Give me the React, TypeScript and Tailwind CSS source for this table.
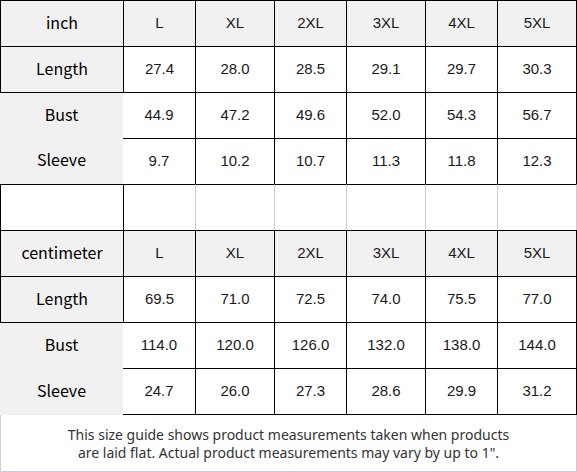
import React from "react"
import clsx from "clsx"

type RowKind = "header" | "length" | "bust" | "sleeve" | "empty"

type Row = {
  kind: RowKind
  label: string
  values: string[]
  bottom?: boolean
}

const widths = [
  "w-[123px]",
  "w-[72px]",
  "w-[79px]",
  "w-[72px]",
  "w-[79px]",
  "w-[72px]",
  "w-[80px]",
]

const sizes = ["L", "XL", "2XL", "3XL", "4XL", "5XL"]

const rows: Row[] = [
  { kind: "header", label: "inch", values: sizes },
  { kind: "length", label: "Length", values: ["27.4", "28.0", "28.5", "29.1", "29.7", "30.3"] },
  { kind: "bust", label: "Bust", values: ["44.9", "47.2", "49.6", "52.0", "54.3", "56.7"] },
  { kind: "sleeve", label: "Sleeve", values: ["9.7", "10.2", "10.7", "11.3", "11.8", "12.3"] },
  { kind: "empty", label: "", values: ["", "", "", "", "", ""] },
  { kind: "header", label: "centimeter", values: sizes },
  { kind: "length", label: "Length", values: ["69.5", "71.0", "72.5", "74.0", "75.5", "77.0"] },
  { kind: "bust", label: "Bust", values: ["114.0", "120.0", "126.0", "132.0", "138.0", "144.0"] },
  { kind: "sleeve", label: "Sleeve", values: ["24.7", "26.0", "27.3", "28.6", "29.9", "31.2"], bottom: true },
]

const labelFont = "font-['Noto_Sans_CJK_SC','Noto_Sans',sans-serif] text-[16px] text-black pb-[4px]"
const numFont = "font-['Liberation_Sans',Arial,sans-serif] text-[15px] text-[#1a1a1a]"

function labelClass(row: Row) {
  return clsx(
    "bg-[#f1f1f1] border-black",
    (row.kind === "header" || row.kind === "length" || row.kind === "empty") && "border-t border-l",
    row.kind === "bust" && "border-t",
    row.kind === "empty" && "bg-white"
  )
}

function dataClass(row: Row, i: number) {
  const last = i === 5
  if (row.kind === "empty") {
    return clsx(
      "bg-white border-t border-t-black",
      i === 0 ? "border-l border-l-black" : "border-l border-l-[#c6cde0]",
      last && "border-r border-r-[#c6cde0]"
    )
  }
  return clsx(
    "border-black border-t",
    row.kind === "header" ? "bg-[#f1f1f1]" : "bg-white",
    (row.kind === "header" || row.kind === "length" || i > 0) && "border-l",
    last && "border-r",
    row.bottom && "border-b"
  )
}

export default function App() {
  return (
    <div className="w-[577px] h-[472px] bg-white overflow-hidden">
      {rows.map((row, r) => (
        <div key={r} className="flex">
          <div
            className={clsx(
              widths[0],
              row.bottom ? "h-[47px]" : "h-[46px]",
              "box-border flex items-center justify-center",
              labelFont,
              labelClass(row)
            )}
          >
            {row.label}
          </div>
          {row.values.map((v, i) => (
            <div
              key={i}
              className={clsx(
                widths[i + 1],
                row.bottom ? "h-[47px]" : "h-[46px]",
                "box-border flex items-center justify-center",
                numFont,
                dataClass(row, i)
              )}
            >
              {v}
            </div>
          ))}
        </div>
      ))}
      <div className="h-[57px] box-border border-l border-r border-b border-[#c6cde0] flex flex-col items-center justify-center pt-[2px] font-['Noto_Sans',sans-serif] text-[14px] leading-[18px] text-[#333]">
        <p>This size guide shows product measurements taken when products</p>
        <p>are laid flat. Actual product measurements may vary by up to 1".</p>
      </div>
    </div>
  )
}
